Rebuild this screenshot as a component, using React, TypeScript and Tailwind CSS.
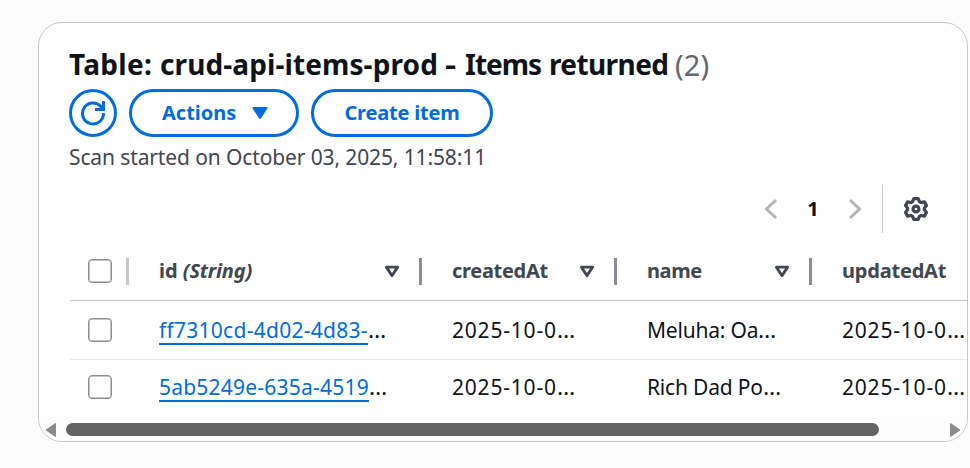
import React from "react";

function SortIcon() {
  return (
    <svg width="16" height="14" viewBox="0 0 16 14" className="mt-px shrink-0" aria-hidden="true">
      <path d="M2.4 2.2h11.2L8 10.6z" fill="none" stroke="#424650" strokeWidth="2.8" strokeLinejoin="round" />
    </svg>
  );
}

function Checkbox() {
  return <span className="block h-6 w-6 shrink-0 rounded-[4px] border border-[#8c8c94] bg-white shadow-[inset_0_0_0_0.5px_#8c8c94]" />;
}

function CheckCell() {
  return (
    <div className="flex w-[60px] shrink-0 items-center pl-[18px]">
      <Checkbox />
    </div>
  );
}

interface Row {
  id: string;
  idClass: string;
  name: string;
}

const rows: Row[] = [
  { id: "ff7310cd-4d02-4d83-", idClass: "tracking-[0.27px]", name: "Meluha: Oa" },
  { id: "5ab5249e-635a-4519", idClass: "tracking-[0.22px]", name: "Rich Dad Po" },
];

function Ellipsis() {
  return <span className="inline-block origin-left scale-x-110">…</span>;
}

function DateText() {
  return (
    <>
      <span className="tracking-[0.8px]">2025-10-0</span>
      <Ellipsis />
    </>
  );
}

function DataRow({ row, last }: { row: Row; last: boolean }) {
  return (
    <div className={"flex w-[920px] items-center text-[21px] leading-[30px] text-[#0f141a] " + (last ? "h-[57px] pb-[3px]" : "h-[59px] border-b border-[#e8e8eb]")}>
      <CheckCell />
      <div className="flex w-[322px] shrink-0 whitespace-nowrap pl-[29px]">
        <span className={"h-[30px] border-b-2 border-[#006ce0] text-[#006ce0] " + row.idClass}>{row.id}</span>
        <Ellipsis />
      </div>
      <div className="w-[195px] shrink-0 whitespace-nowrap"><DateText /></div>
      <div className="w-[195px] shrink-0 whitespace-nowrap">
        <span className="tracking-[-0.2px]">{row.name}</span>
        <Ellipsis />
      </div>
      <div className="shrink-0 whitespace-nowrap"><DateText /></div>
    </div>
  );
}

export default function App() {
  return (
    <div className="h-[468px] w-[970px] overflow-hidden bg-[#fcfcfd] pl-[38px] pt-[22px] font-['Noto_Sans','Open_Sans',sans-serif]">
      <main className="flex h-[420px] w-[930px] flex-col overflow-hidden rounded-[24px] border border-[#c6c6cd] bg-white">
        <header className="pl-[30px] pt-[23px]">
          <h1 className="flex h-[43px] whitespace-nowrap text-[28px] font-bold leading-[37px] text-[#0f141a]">
            <span className="w-[91px] tracking-[0.3px]">Table:</span>
            <span className="w-[285px] tracking-[0.1px]">crud-api-items-prod</span>
            <span className="w-[20px] origin-left scale-x-125">-</span>
            <span className="w-[84px] tracking-[-1px]">Items</span>
            <span className="w-[126px] tracking-[-0.6px]">returned</span>
            <span className="text-[29px] font-normal tracking-[0.1px] text-[#656871]">(2)</span>
          </h1>
          <div className="flex gap-3 text-[20px] font-bold text-[#006ce0]">
            <button className="flex h-12 w-12 items-center justify-center rounded-full border-[3px] border-[#006ce0]" aria-label="Refresh">
              <svg width="26" height="26" viewBox="0 0 26 26" fill="none" stroke="#006ce0" strokeWidth="3">
                <path d="M23.5 13A10.5 10.5 0 1 1 20.8 6.4L23 8.6" />
                <path d="M23.5 1v8.5H15" />
              </svg>
            </button>
            <button className="flex h-12 w-[170px] items-center rounded-full border-[3px] border-[#006ce0] pl-[30px] leading-[30px]">
              <span className="w-[89px] whitespace-nowrap pb-px text-left">Actions</span>
              <svg width="18" height="14" viewBox="0 0 18 14" fill="#006ce0" stroke="#006ce0" strokeWidth="2" strokeLinejoin="round">
                <path d="M2.5 2h13L9 12z" />
              </svg>
            </button>
            <button className="flex h-12 w-[182px] items-center justify-center whitespace-nowrap rounded-full border-[3px] border-[#006ce0] pb-px leading-[30px] tracking-[-0.2px]">
              Create item
            </button>
          </div>
          <p className="mt-[5px] h-[31px] whitespace-nowrap text-[21px] leading-[31px] tracking-[-0.12px] text-[#424650]">Scan started on October 03, 2025, 11:58:11</p>
        </header>
        <div className="mt-[12px] flex h-12 items-center pl-[725px]">
          <svg width="14" height="22" viewBox="0 0 14 22" fill="none" stroke="#b4b4bb" strokeWidth="3"><path d="M12 2L2.5 11 12 20" /></svg>
          <span className="w-[70px] text-center text-[20px] font-bold text-[#0f141a]">1</span>
          <svg width="14" height="22" viewBox="0 0 14 22" fill="none" stroke="#b4b4bb" strokeWidth="3"><path d="M2 2l9.5 9L2 20" /></svg>
          <span className="ml-5 h-12 w-px bg-[#c6c6cd]" />
          <svg className="ml-5" width="26" height="26" viewBox="0 0 26 26" fill="none" stroke="#424650" strokeWidth="3.2" strokeLinejoin="round">
            <path d="M10.8 2.6h4.4l1.2 3 1.6.9 3.4-.6 2.1 3.7-2.1 2.6v1.6l2.1 2.6-2.1 3.7-3.4-.6-1.6.9-1.2 3h-4.4l-1.2-3-1.6-.9-3.4.6-2.1-3.7 2.1-2.6v-1.6l-2.1-2.6 2.1-3.7 3.4.6 1.6-.9z" />
            <circle cx="13" cy="13" r="2.9" />
          </svg>
        </div>
        <section className="ml-[31px] h-[184px] shrink-0 overflow-hidden">
          <div className="flex h-[68px] w-[920px] items-center border-b border-[#c6c6cd] pt-[9px] text-[20px] font-bold leading-[30px] text-[#424650]">
            <CheckCell />
            <div className="flex w-[322px] shrink-0 items-center">
              <span className="-ml-[4px] h-[27px] w-[3px] bg-[#c6c6cd]" />
              <span className="ml-[30px] w-[225px] whitespace-nowrap">id <i className="tracking-[-0.2px]">(String)</i></span>
              <SortIcon />
              <span className="ml-[19px] h-[27px] w-[3px] bg-[#8c8c94]" />
            </div>
            <div className="flex w-[195px] shrink-0 items-center">
              <span className="w-[127px] tracking-[-0.3px]">createdAt</span>
              <SortIcon />
              <span className="ml-[19px] h-[27px] w-[3px] bg-[#8c8c94]" />
            </div>
            <div className="flex w-[195px] shrink-0 items-center">
              <span className="w-[127px] tracking-[-0.4px]">name</span>
              <SortIcon />
              <span className="ml-[19px] h-[27px] w-[3px] bg-[#8c8c94]" />
            </div>
            <span className="shrink-0 tracking-[-0.2px]">updatedAt</span>
          </div>
          {rows.map((row, i) => <DataRow key={row.id} row={row} last={i === 1} />)}
        </section>
        <div className="flex h-[24px] shrink-0 items-center bg-[#fcfcfc] pl-[6px] pr-[6px]">
          <svg className="mt-px" width="12" height="16" viewBox="0 0 12 16" fill="#8b8b8b" stroke="#8b8b8b" strokeLinejoin="round"><path d="M10.5 1.5v13L1 8z" /></svg>
          <span className="ml-[9px] h-[13px] w-[813px] rounded-full bg-[#636363]" />
          <svg className="ml-auto mt-px" width="12" height="16" viewBox="0 0 12 16" fill="#8b8b8b" stroke="#8b8b8b" strokeLinejoin="round"><path d="M1.5 1.5v13L11 8z" /></svg>
        </div>
      </main>
    </div>
  );
}
